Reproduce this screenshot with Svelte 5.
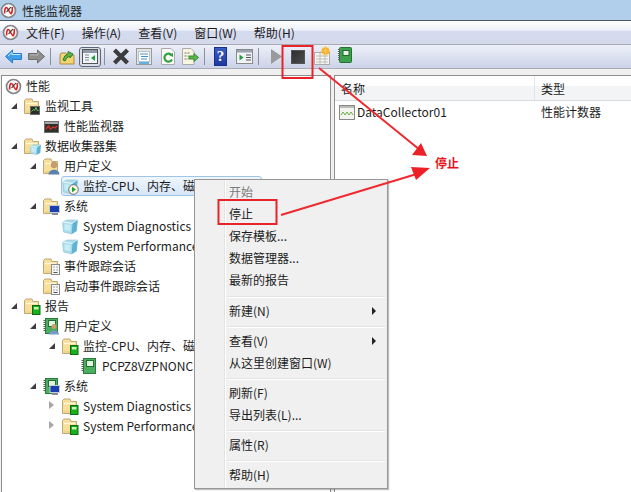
<script>
  const menus = ['文件(F)', '操作(A)', '查看(V)', '窗口(W)', '帮助(H)'];
  const tree = [
    { d: 0, exp: '', icon: 'perf', t: '性能' },
    { d: 1, exp: 'o', icon: 'foldertool', t: '监视工具' },
    { d: 2, exp: '', icon: 'monitor', t: '性能监视器' },
    { d: 1, exp: 'o', icon: 'foldercube', t: '数据收集器集' },
    { d: 2, exp: 'o', icon: 'folderuser', t: '用户定义' },
    { d: 3, exp: '', icon: 'cubeplay', t: '监控-CPU、内存、磁盘', sel: true },
    { d: 2, exp: 'o', icon: 'foldersys', t: '系统' },
    { d: 3, exp: '', icon: 'cube', t: 'System Diagnostics' },
    { d: 3, exp: '', icon: 'cube', t: 'System Performance' },
    { d: 2, exp: '', icon: 'folderdoc', t: '事件跟踪会话' },
    { d: 2, exp: '', icon: 'folderdoc', t: '启动事件跟踪会话' },
    { d: 1, exp: 'o', icon: 'foldergreen', t: '报告' },
    { d: 2, exp: 'o', icon: 'bookuser', t: '用户定义' },
    { d: 3, exp: 'o', icon: 'foldergreen', t: '监控-CPU、内存、磁盘' },
    { d: 4, exp: '', icon: 'book', t: 'PCPZ8VZPNONC' },
    { d: 2, exp: 'o', icon: 'booksys', t: '系统' },
    { d: 3, exp: 'c', icon: 'foldergreen', t: 'System Diagnostics' },
    { d: 3, exp: 'c', icon: 'foldergreen', t: 'System Performance' }
  ];
  const ctx = [
    [{ t: '开始', off: true }, { t: '停止' }, { t: '保存模板...' }, { t: '数据管理器...' }, { t: '最新的报告' }],
    [{ t: '新建(N)', sub: true }],
    [{ t: '查看(V)', sub: true }, { t: '从这里创建窗口(W)' }],
    [{ t: '刷新(F)' }, { t: '导出列表(L)...' }],
    [{ t: '属性(R)' }],
    [{ t: '帮助(H)' }]
  ];
</script>

{#snippet perfmark()}
  <circle cx="8.5" cy="8.5" r="7" fill="#fbfbf8" stroke="#85858a" stroke-width="1.7"/>
  <path d="M4.600 11.500Q4.500 6.500 6 5.500 7.500 5.500 9 9 10.500 12 11.500 11.500 12.700 9 12.300 5" fill="none" stroke="#d6252a" stroke-width="1.600"/>
  <path d="M6.500 10L11 5" stroke="#2a2a2a" stroke-width="1.100"/>
{/snippet}
{#snippet perf(s)}
  <svg width={s} height={s} viewBox="0 0 17 17">{@render perfmark()}</svg>
{/snippet}
{#snippet folder()}
  <path d="M.5 4V15.500H14.500V3.500H9L8 1H2L.5 2.500Z" fill="#f7df99" stroke="#bda876"/>
  <path d="M2 5.500H13" stroke="#fff7d8" stroke-width="1.500"/>
  <path d="M2 14L13 14" stroke="#e9c97a"/>
{/snippet}
{#snippet green(x, y, w, h)}
  <rect {x} {y} width={w} height={h} fill="#18b018" stroke="#0b6a12"/><rect x={x + 1.500} y={y + 1.500} width={w - 3} height="2.500" fill="#c8f4b8"/>
{/snippet}
{#snippet cube(x, y, k)}
  <g transform="translate({x} {y}) scale({k})"><path d="M0 3L5 1 15 1 14 12 9 15 1 13Z" fill="#a6dcec" stroke="#9cc0cc" stroke-width=".6"/><path d="M0 3L10 4.500 15 1" fill="none" stroke="#eefafd" stroke-width="1.100"/><path d="M10 4.500L9 15 14 12 15 1Z" fill="#5fb2d2"/><path d="M2 5L8 6 8 12 2 11Z" fill="#c6ecf5"/></g>
{/snippet}
{#snippet ticon(name)}
  <svg class="ticon" width="17" height="17" viewBox="0 0 17 17">
    {#if name === 'perf'}
      {@render perfmark()}
    {:else if name === 'monitor'}
      <rect x="1.500" y="3.500" width="14" height="11" fill="#30302e" stroke="#6e6e6e"/><rect x="2" y="4" width="13" height="2" fill="#a8a8a8"/><path d="M3 11l2.500-3 2 3 2.500-2 2 1 2-2" fill="none" stroke="#e0302a" stroke-width="1.200"/>
    {:else if name === 'cube' || name === 'cubeplay'}
      {@render cube(.5, 1, 1)}
      {#if name === 'cubeplay'}<circle cx="11.500" cy="11.500" r="4.800" fill="#f8f8ee" stroke="#6a6a6a"/><path d="M10 8.800l4 2.700-4 2.700Z" fill="#1fa01f"/>{/if}
    {:else if name === 'book' || name === 'bookuser' || name === 'booksys'}
      <rect x="2.500" y=".5" width="12" height="15" fill="#4aae5e" stroke="#2c7a3c"/><path d="M1.500 2v12" stroke="#555" stroke-dasharray="1 1" stroke-width="2"/><rect x="5.500" y="2.500" width="7" height="6" fill="#e2f3e0" stroke="#246e34"/>
      {#if name === 'bookuser'}<circle cx="11" cy="8.500" r="2.500" fill="#c99b70"/><path d="M6 16.500c0-5 10-5 10 0Z" fill="#7a9ac4"/>{/if}
      {#if name === 'booksys'}<rect x="7" y="7.500" width="9.500" height="7" fill="#1a3fb0" stroke="#c4ccd8"/><path d="M9 16h6" stroke="#889" stroke-width="2"/>{/if}
    {:else}
      {@render folder()}
      {#if name === 'foldertool'}<rect x="6.500" y="8.500" width="9" height="8" fill="#2c2c2a" stroke="#6a6a6a"/><path d="M7.500 13.500l2-2 1 1 1.500-3 1.500 3.500 1-1" fill="none" stroke="#5fd05f"/>{/if}
      {#if name === 'foldercube'}{@render cube(6, 6, .72)}{/if}
      {#if name === 'folderuser'}<circle cx="11" cy="7" r="3.200" fill="#c79a70"/><path d="M5.500 16.500c0-6.500 11-6.500 11 0Z" fill="#5a80b0"/>{/if}
      {#if name === 'foldersys'}<rect x="6.500" y="7.500" width="10" height="7" fill="#1a3fb0" stroke="#c4ccd8"/><path d="M9 16h6" stroke="#889" stroke-width="2"/>{/if}
      {#if name === 'folderdoc'}<rect x="8.500" y="6.500" width="8" height="10" fill="#f6f6f6" stroke="#8a8a8a"/><path d="M10.500 9h1M13.500 9h1M10.500 12h1M13.500 12h1M10.500 14.500h4" stroke="#555"/>{/if}
      {#if name === 'foldergreen'}{@render green(8.5, 7.5, 7.5, 9)}{/if}
    {/if}
  </svg>
{/snippet}

<div class="win">
  <header class="title">
    {@render perf(17)}
    <span>性能监视器</span>
  </header>

  <nav class="menubar">
    {@render perf(17)}
    <div class="menus">{#each menus as m}<span>{m}</span>{/each}</div>
  </nav>

  <div class="toolbar">
    <svg width="17" height="15" viewBox="0 0 17 15"><path d="M.5 7.500L7.500 1V4.500H16.500V10.500H7.500V14Z" fill="#3f9fe8" stroke="#2a7cc8"/><path d="M3 7l4-3.500V5.500H15.500" fill="none" stroke="#bfe8ff"/></svg>
    <svg class="ml6" width="17" height="15" viewBox="0 0 17 15"><path d="M16.500 7.500L9.500 1V4.500H.5V10.500H9.500V14Z" fill="#8f8f8f" stroke="#6c6c6c"/><path d="M2 6H10V3.500" fill="none" stroke="#b4b4b4"/></svg>
    <i class="sep ml5"></i>
    <svg class="ml8" width="17" height="17" viewBox="0 0 17 17"><path d="M1 7V16H15V7H8L7 5H2Z" fill="#f3d470" stroke="#a88b48"/><path d="M4 12Q5 7 9 6V3.500L14 6l-3 4V8Q7 9 6 13Z" fill="#5bb548" stroke="#2f7c2c"/></svg>
    <span class="pressed ml3"><svg width="16" height="15" viewBox="0 0 16 15"><rect x=".5" y=".5" width="15" height="14" fill="#f1f4f9" stroke="#555"/><rect x="1" y="1" width="14" height="3" fill="#8f98a8"/><path d="M3 6h4M3 8.500h4M3 11h4" stroke="#7c8c96" stroke-width="1.200"/><path d="M13 6v6l-4-3Z" fill="#1f9f3f"/></svg></span>
    <i class="sep ml3"></i>
    <svg class="ml7" width="18" height="17" viewBox="0 0 18 17"><path d="M2.500 2L15.500 15M15.500 2L2.500 15" stroke="#3c3c3c" stroke-width="4.200"/></svg>
    <svg class="ml6" width="16" height="17" viewBox="0 0 16 17"><rect x=".5" y=".5" width="15" height="16" fill="#e4e6e4" stroke="#9a9a9a"/><rect x="2.500" y="3.500" width="11" height="10" fill="#fff" stroke="#b4c4d4"/><path d="M4 6h8M5 8.500h7M5 11h6" stroke="#4a90c8"/><path d="M3 15h10" stroke="#3aa0d8" stroke-width="1.500"/></svg>
    <svg class="ml8" width="16" height="17" viewBox="0 0 16 17"><path d="M1.500.5H11l3.500 3.500V16.500H1.500Z" fill="#f8f8f4" stroke="#aaa"/><path d="M11.500 7A4 4 0 1 0 12 11.500" fill="none" stroke="#2f9f3f" stroke-width="2.200"/><path d="M9 7l4-2v4Z" fill="#2f9f3f"/></svg>
    <svg class="ml5" width="18" height="17" viewBox="0 0 18 17"><path d="M1.500.5H10l3 3V16.500H1.500Z" fill="#f8f6e0" stroke="#aaa"/><path d="M3.500 5h5M3.500 8h4M3.500 11h4" stroke="#777" stroke-dasharray="2 1"/><path d="M8 8h5V5.500l4.500 4-4.500 4V11H8Z" fill="#58b548" stroke="#3c8c34"/></svg>
    <i class="sep ml5"></i>
    <span class="help ml9">?</span>
    <svg class="ml9" width="17" height="15" viewBox="0 0 17 15"><rect x=".5" y=".5" width="16" height="14" fill="#f1f3f6" stroke="#8a8a8a"/><rect x="1" y="1" width="15" height="2.500" fill="#9aa2b0"/><path d="M10 6h5M10 8.500h5M10 11h5" stroke="#555" stroke-width="1.200"/><path d="M3.500 5.500v6l4-3Z" fill="#1f9f3f"/></svg>
    <i class="sep ml5"></i>
    <svg class="ml12" width="11" height="15" viewBox="0 0 11 15"><path d="M0 0L11 7.500 0 15Z" fill="#9a9a9a"/></svg>
    <span class="stop ml9"></span>
    <svg class="ml9 up" width="17" height="19" viewBox="0 0 17 19"><rect x=".5" y="6.500" width="15" height="12" fill="#f6f6f0" stroke="#aaa"/><path d="M2 10h12M2 13h12M2 16h12M6 7v11M11 7v11" stroke="#bcbcbc"/><circle cx="11.500" cy="5" r="3.800" fill="#f6a818"/><path d="M11.500 0v10M6.500 5h10M8 1.500l7 7M15 1.500l-7 7" stroke="#f8c858"/></svg>
    <svg class="ml7 up" width="14" height="17" viewBox="0 0 14 17"><rect x="1.500" y=".5" width="12" height="15" rx="1" fill="#3ca04c" stroke="#276f35"/><path d="M.8 2v12" stroke="#666" stroke-width="1.600" stroke-dasharray="1 1"/><rect x="5" y="3.500" width="6" height="5" fill="#e6f4e4" stroke="#1e6a2e"/></svg>
  </div>

  <main class="panes">
    <section class="left">
      {#each tree as r}
        <div class="row" style="padding-left:{r.d * 19}px">
          <span class="exp">{#if r.exp === 'o'}<i class="tri-o"></i>{:else if r.exp === 'c'}<i class="tri-c"></i>{/if}</span>
          <span class="rowbody" class:sel={r.sel}>
            {@render ticon(r.icon)}
            <span class="txt">{r.t}</span>
          </span>
        </div>
      {/each}
    </section>
    <section class="right">
      <div class="head"><span class="c1">名称</span><span class="c2">类型</span></div>
      <div class="item">
        <span class="c1"><svg width="16" height="15" viewBox="0 0 16 15"><rect x=".5" y=".5" width="15" height="14" fill="#f4f4ee" stroke="#888"/><rect x="1" y="1" width="14" height="2" fill="#bbb"/><path d="M2 10l2-3 2 3 2-3 2 3 2-3 2 3" fill="none" stroke="#6fae4f"/></svg>DataCollector01</span>
        <span class="c2">性能计数器</span>
      </div>
    </section>
  </main>

  <div class="ctx">
    {#each ctx as group, i}
      {#if i > 0}<hr class:first={i === 1} />{/if}
      {#each group as it}
        <div class="ci" class:off={it.off}><span>{it.t}</span>{#if it.sub}<i class="arrow"></i>{/if}</div>
      {/each}
    {/each}
  </div>

  <svg class="notes" width="631" height="492" viewBox="0 0 631 492">
    <g fill="none" stroke="#e8232a" stroke-width="2">
      <rect x="282.500" y="46" width="30" height="32"/>
      <rect x="218.500" y="200" width="58" height="24"/>
    </g>
    <g stroke="#ee2a30" stroke-width="2">
      <path d="M319 68L420 150"/>
      <path d="M281 215L420 173"/>
    </g>
    <path d="M427 156L412 155 421 143Z" fill="#ee2027"/>
    <path d="M430 168L416 180 411 167Z" fill="#ee2027"/>
  </svg>
  <span class="stoplabel">停止</span>
</div>

<style>
  :global(body) { margin: 0; background: #fff; }
  .win {
    position: relative; width: 631px; height: 492px; overflow: hidden;
    font: 12px/17px "Noto Sans CJK SC", "Noto Sans", sans-serif; color: #1c1c1c;
    background: #f0f0f0;
  }
  .title {
    height: 21px; box-sizing: border-box; background: #b1cfea; border-bottom: 1px solid #4d5560;
    display: flex; align-items: center; gap: 5px;
  }
  .title svg { margin-top: 1px; }
  .menubar {
    height: 24px; box-sizing: border-box; padding-left: 2px; display: flex; align-items: center;
    background: linear-gradient(#fdfeff 0, #eef1f8 40%, #d5dbee 45%, #d4daec 100%);
    border-bottom: 1px solid #a9abb0;
  }
  .menus { display: flex; gap: 17px; margin-left: 7px; }
  .toolbar {
    height: 24px; box-sizing: border-box; display: flex; align-items: center;
    background: linear-gradient(#edf0f9, #ccd3e8);
    border-bottom: 1px solid #a9acb4; padding-left: 5px;
  }
  .toolbar svg { flex: none; }
  .ml3 { margin-left: 3px; }
  .ml5 { margin-left: 5px; }
  .ml6 { margin-left: 6px; }
  .ml7 { margin-left: 7px; }
  .ml8 { margin-left: 8px; }
  .ml9 { margin-left: 9px; }
  .ml12 { margin-left: 12px; }
  .up { margin-top: -3px; }
  .sep { width: 1px; height: 17px; background: #8a8f9a; flex: none; }
  .pressed {
    display: flex; align-items: center; justify-content: center; width: 22px; height: 20px; box-sizing: border-box;
    border: 1.500px solid #5e6674; border-radius: 3px; background: #d9dee8; flex: none;
  }
  .help {
    width: 11px; height: 17px; background: linear-gradient(#3a5cc8, #1f3aa0); color: #fff;
    font: bold 15px/17px "Liberation Serif", serif;
    text-align: center; border: 1px solid #16308c; flex: none;
  }
  .stop {
    width: 12px; height: 12px; background: linear-gradient(135deg, #2e2e2e, #4c4c4c); border: 1px solid #555;
    flex: none;
  }
  .panes { display: flex; height: 423px; padding-top: 6px; box-sizing: border-box; }
  .left {
    width: 330px; box-sizing: border-box; background: #fff; margin-left: 1px;
    border: 1px solid #8e8e8e; border-bottom: 0; overflow: hidden;
  }
  .row { display: flex; align-items: center; height: 20px; white-space: nowrap; }
  .exp { width: 3px; height: 20px; flex: none; position: relative; }
  .rowbody { display: flex; align-items: center; height: 20px; gap: 4px; flex: 1; box-sizing: border-box; }
  .ticon { flex: none; }
  .txt { margin-top: -2px; }
  .sel {
    border: 1px solid #9fc4e8; border-radius: 3px; margin-left: -1px; gap: 4px;
    background: linear-gradient(#f0f6fd, #d5e6f8); margin-right: 68px;
  }
  .tri-o {
    position: absolute; left: -10px; top: 7px; width: 0; height: 0;
    border-left: 6px solid transparent; border-bottom: 6px solid #3d3d3d;
  }
  .tri-c {
    position: absolute; left: -10px; top: 5px; width: 0; height: 0;
    border-top: 4.500px solid transparent; border-bottom: 4.500px solid transparent; border-left: 5px solid #a6a6a6;
  }
  .right {
    flex: 1; margin-left: 3px; background: #fff; border-top: 1px solid #8e8e8e; border-left: 1px solid #8e8e8e;
  }
  .head {
    display: flex; height: 24px; align-items: center; border-bottom: 1px solid #d8dadd;
    background: linear-gradient(#fff 0, #fff 40%, #f2f4f6 42%, #f2f4f6 100%);
  }
  .item { display: flex; align-items: center; height: 20px; }
  .item svg { margin-top: 2px; }
  .c1 { width: 200px; box-sizing: border-box; padding-left: 6px; display: flex; gap: 2px; align-items: center; }
  .head .c1 { border-right: 1px solid #e2e4e7; height: 24px; }
  .item .c1 { padding-left: 4px; }
  .c2 { padding-left: 6px; }
  .ctx {
    position: absolute; left: 194px; top: 179px; width: 194px; height: 310px; box-sizing: border-box;
    background: linear-gradient(90deg, #f0f0f0 29px, #e2e3e3 29px, #e2e3e3 30px, #fff 30px, #fff 31px, #f0f0f0 31px);
    border: 1px solid #979797; padding: 1px 2px 0; box-shadow: 1px 1px 1px rgba(0, 0, 0, 0.25);
  }
  .ci { height: 22px; display: flex; align-items: center; justify-content: space-between; padding: 0 9px 0 32px; }
  .ci span { margin-top: -1px; }
  .off { color: #7a7a7a; }
  .arrow { width: 0; height: 0; border-left: 4px solid #222; border-top: 4px solid transparent; border-bottom: 4px solid transparent; }
  hr { border: 0; margin: 4px 0 2px 30px; height: 2px; background: linear-gradient(#e2e3e3 1px, #fff 1px); }
  hr.first { margin-top: 5px; }
  .notes { position: absolute; left: 0; top: 0; pointer-events: none; }
  .stoplabel { position: absolute; left: 435px; top: 154px; color: #e8141c; font-weight: 700; font-size: 12px; }
</style>
